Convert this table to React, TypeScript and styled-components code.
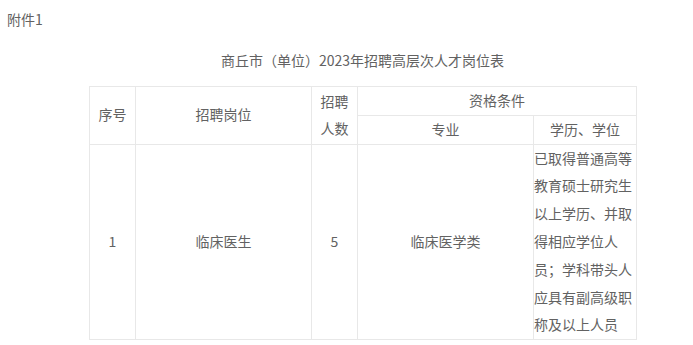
import styled, { createGlobalStyle } from "styled-components";

const GlobalStyle = createGlobalStyle`
  html, body {
    margin: 0;
    padding: 0;
    background: #fff;
  }
  body {
    font-family: "Noto Sans CJK SC", "Noto Sans", sans-serif;
    font-size: 14px;
    color: #626262;
  }
`;

const Page = styled.div`
  padding: 8px 0 0 7px;
`;

const Attachment = styled.p`
  margin: 0;
  line-height: 22px;
`;

const Block = styled.div`
  width: 547px;
  margin-left: 82px;
`;

const Title = styled.p`
  margin: 19px 0 0;
  line-height: 22px;
  text-align: center;
`;

const Table = styled.table`
  margin-top: 15px;
  width: 547px;
  border-collapse: collapse;
  table-layout: fixed;
`;

const Cell = styled.td<{ $left?: boolean }>`
  border: 1px solid #e8e8e8;
  padding: 0;
  line-height: 27.8px;
  text-align: ${(p) => (p.$left ? "left" : "center")};
  vertical-align: middle;
  word-break: break-all;
`;

const requirement = [
  "已取得普通高等",
  "教育硕士研究生",
  "以上学历、并取",
  "得相应学位人",
  "员；学科带头人",
  "应具有副高级职",
  "称及以上人员",
];

export default function App() {
  return (
    <>
      <GlobalStyle />
      <Page>
        <Attachment>附件1</Attachment>
        <Block>
          <Title>商丘市（单位）2023年招聘高层次人才岗位表</Title>
          <Table>
            <colgroup>
              <col style={{ width: 46 }} />
              <col style={{ width: 176 }} />
              <col style={{ width: 46 }} />
              <col style={{ width: 176 }} />
              <col style={{ width: 103 }} />
            </colgroup>
            <tbody>
              <tr>
                <Cell rowSpan={2}>序号</Cell>
                <Cell rowSpan={2}>招聘岗位</Cell>
                <Cell rowSpan={2}>
                  招聘
                  <br />
                  人数
                </Cell>
                <Cell colSpan={2}>资格条件</Cell>
              </tr>
              <tr>
                <Cell>专业</Cell>
                <Cell>学历、学位</Cell>
              </tr>
              <tr>
                <Cell>1</Cell>
                <Cell>临床医生</Cell>
                <Cell>5</Cell>
                <Cell>临床医学类</Cell>
                <Cell $left>
                  {requirement.map((line, i) => (
                    <div key={i}>{line}</div>
                  ))}
                </Cell>
              </tr>
            </tbody>
          </Table>
        </Block>
      </Page>
    </>
  );
}
